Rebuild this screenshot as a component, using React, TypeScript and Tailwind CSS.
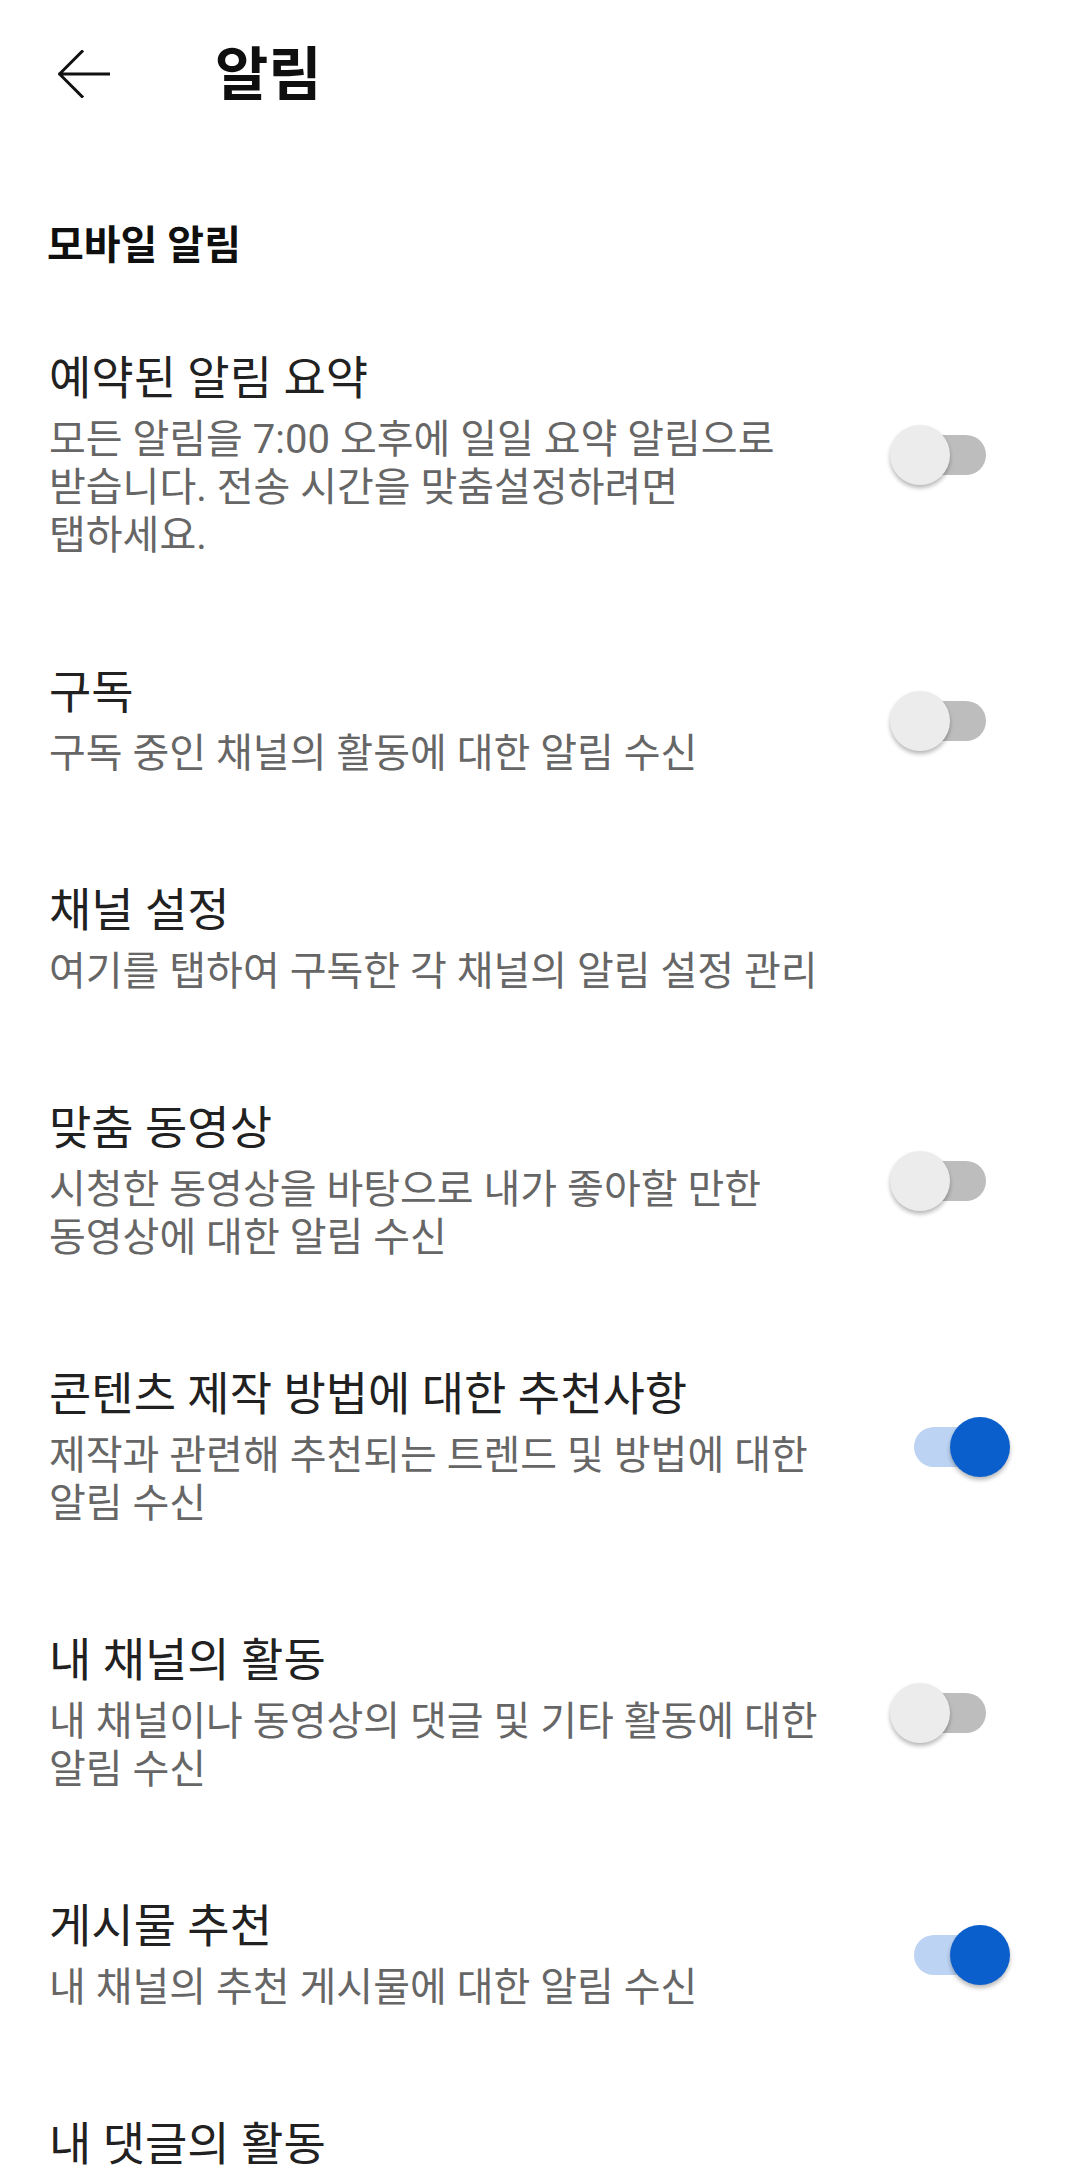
import React from "react";

type Item = {
  title: string;
  lines: string[];
  toggle?: boolean;
};

const items: Item[] = [
  {
    title: "예약된 알림 요약",
    lines: [
      "모든 알림을 7:00 오후에 일일 요약 알림으로",
      "받습니다. 전송 시간을 맞춤설정하려면",
      "탭하세요.",
    ],
    toggle: false,
  },
  { title: "구독", lines: ["구독 중인 채널의 활동에 대한 알림 수신"], toggle: false },
  { title: "채널 설정", lines: ["여기를 탭하여 구독한 각 채널의 알림 설정 관리"] },
  {
    title: "맞춤 동영상",
    lines: ["시청한 동영상을 바탕으로 내가 좋아할 만한", "동영상에 대한 알림 수신"],
    toggle: false,
  },
  {
    title: "콘텐츠 제작 방법에 대한 추천사항",
    lines: ["제작과 관련해 추천되는 트렌드 및 방법에 대한", "알림 수신"],
    toggle: true,
  },
  {
    title: "내 채널의 활동",
    lines: ["내 채널이나 동영상의 댓글 및 기타 활동에 대한", "알림 수신"],
    toggle: false,
  },
  { title: "게시물 추천", lines: ["내 채널의 추천 게시물에 대한 알림 수신"], toggle: true },
  { title: "내 댓글의 활동", lines: [] },
];

function Toggle({ on }: { on: boolean }) {
  return (
    <div className="relative w-[120px] h-[60px] shrink-0">
      <div
        className={
          "absolute left-[24px] top-[10px] w-[72px] h-[40px] rounded-full " +
          (on ? "bg-[#bcd3f3]" : "bg-[#bdbdbd]")
        }
      />
      <div
        className={
          "absolute top-0 w-[60px] h-[60px] rounded-full shadow-[0_3px_4px_rgba(0,0,0,0.28)] " +
          (on ? "left-[60px] bg-[#0b5fcd]" : "left-0 bg-[#ececec]")
        }
      />
    </div>
  );
}

export default function App() {
  return (
    <div
      className="w-[1080px] h-[2168px] overflow-hidden bg-white text-[#212121]"
      style={{ fontFamily: 'Roboto, "Noto Sans CJK KR", sans-serif' }}
    >
      <header className="h-[147px] flex items-center">
        <div className="w-[215px] pl-[58px] flex items-center">
          <svg width="52" height="48" viewBox="0 0 52 48" fill="none">
            <path
              d="M51 24H2M24 1.5L1.5 24L24 46.5"
              stroke="#111"
              strokeWidth="3"
              strokeLinecap="square"
            />
          </svg>
        </div>
        <h1 className="text-[58px] leading-[64px] font-bold text-[#0f0f0f] mt-[2px]">알림</h1>
      </header>

      <div className="pl-[47px] pt-[74px] pb-[27px]">
        <h2 className="text-[40px] leading-[50px] font-bold text-[#0f0f0f]">모바일 알림</h2>
      </div>

      <div>
        {items.map((it, i) => (
          <div key={i} className="flex items-center pl-[49px] pr-[70px] py-[52px]">
            <div className="flex-1 min-w-0">
              <div className="text-[46px] leading-[56px] text-[#212121] whitespace-nowrap">
                {it.title}
              </div>
              {it.lines.length > 0 && (
                <div className="mt-[10px] text-[40px] leading-[48px] text-[#666666]">
                  {it.lines.map((l, j) => (
                    <div key={j} className="whitespace-nowrap">
                      {l}
                    </div>
                  ))}
                </div>
              )}
            </div>
            {it.toggle !== undefined && <Toggle on={it.toggle} />}
          </div>
        ))}
      </div>
    </div>
  );
}
